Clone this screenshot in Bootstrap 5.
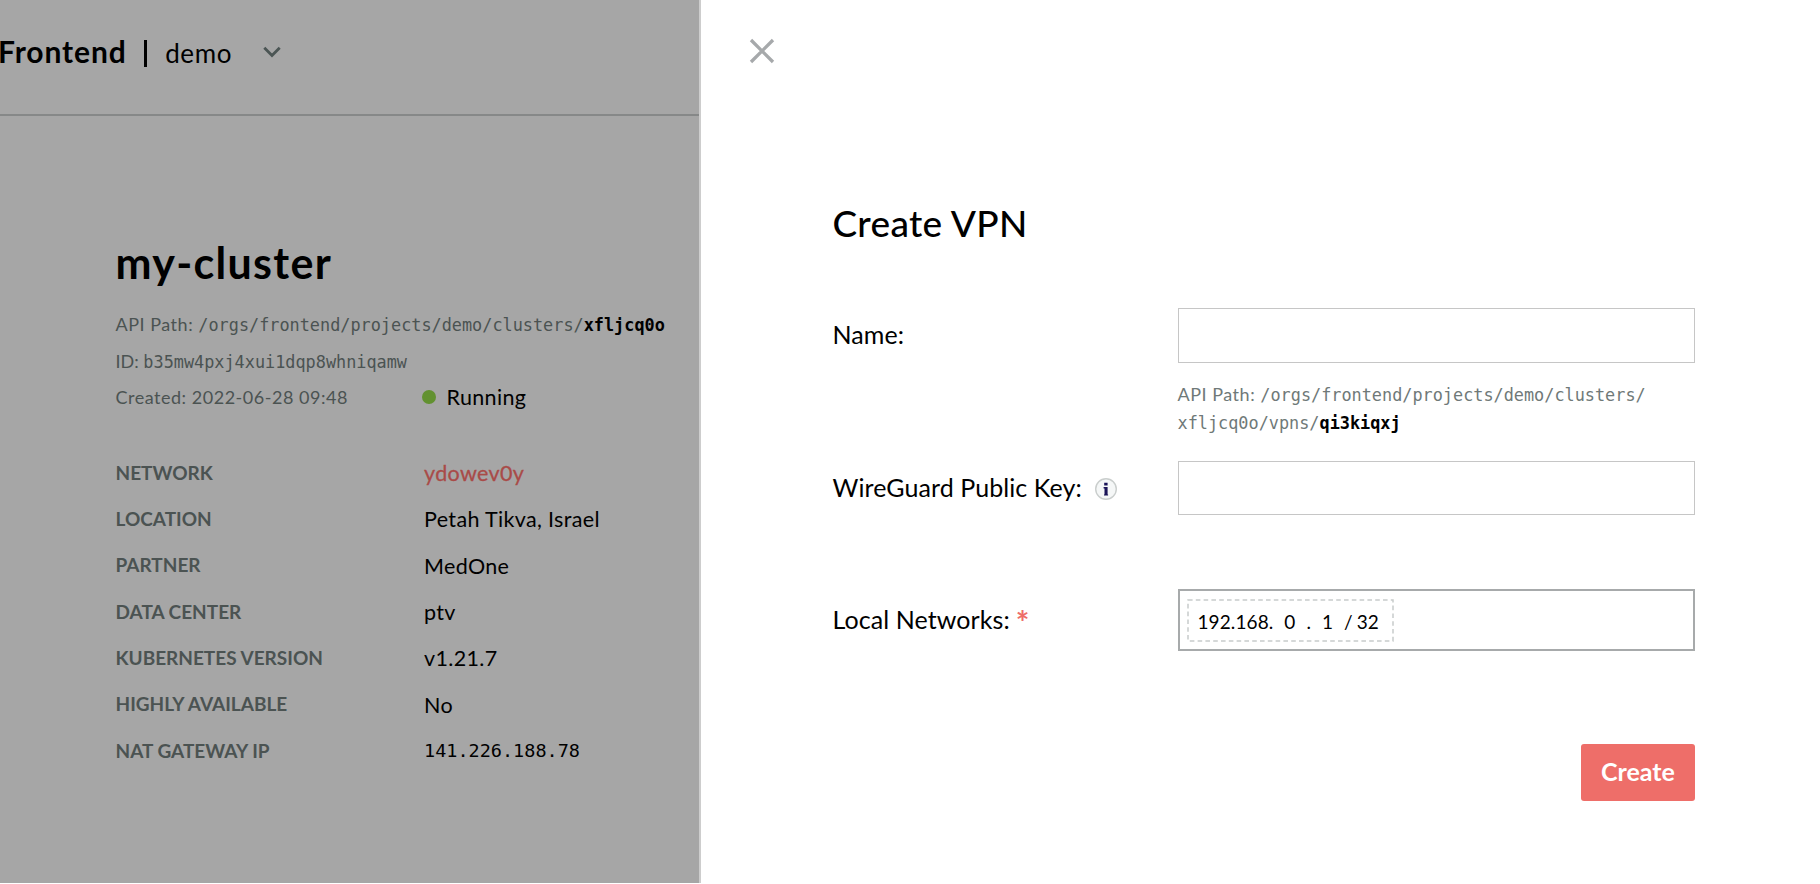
<!DOCTYPE html>
<html lang="en">
<head>
<meta charset="utf-8">
<title>Create VPN</title>
<link rel="stylesheet" href="https://cdn.jsdelivr.net/npm/bootstrap@5.3.0/dist/css/bootstrap.min.css">
<style>
body{width:1820px;height:884px;overflow:hidden;background:#fff;color:#000;font-family:Lato,"Open Sans",sans-serif;white-space:nowrap}
.backdrop-side{width:699px;height:883px;background:#a6a6a6}
.drawer{border-left:2px solid #cdcdcd;height:883px}
.top-line{height:116px;border-bottom:2px solid #868888;padding-bottom:10px}
.org{font-size:30px;font-weight:700;margin-left:-2px;letter-spacing:.9px;line-height:36px;margin-top:-2px}
.bar{width:3px;height:27px;background:#000;margin:2px 18px 0 17.5px}
.proj{font-size:26px;letter-spacing:.6px;margin-top:1px;line-height:36px}
.chev{margin:0 0 0 31px}
.cluster{padding-left:115.5px}
.title{font-size:43px;font-weight:700;line-height:50px;margin:122px 0 18px;letter-spacing:1.3px}
.meta{font-size:18px;color:#4b5352;line-height:36px;height:37px}
.meta.created-line{height:36px;margin-top:-1.5px}
.wide{letter-spacing:.52px}
.mono{font-family:"DejaVu Sans Mono",monospace;font-size:16.85px;line-height:1;letter-spacing:0}
.mono b{color:#000}
.created{width:306.5px}
.dot{width:14px;height:14px;border-radius:50%;background:#629130;margin-right:10.5px}
.facts{margin-top:35.5px}
.fact{height:46.3px}
.fact dt{width:308.5px;font-size:19px;color:#4b5352}
.fact dd,.run{font-size:21.5px;color:#000;letter-spacing:.35px}
.fact dd.ip{font-size:18.5px;letter-spacing:0}
.fact dd.net{color:#a94b48;-webkit-text-stroke:.3px #a94b48}
.close-x{margin:38px 0 0 47.5px;display:block}
.pane{padding-left:131.5px}
.head{font-size:37px;line-height:44px;margin:136.5px 0 63.5px;letter-spacing:.3px}
.lab{width:345px;font-size:25px;line-height:53px;letter-spacing:.08px}
.field-row .form-control,.box{width:517.5px;height:54.5px;border:1.5px solid #c6c6c6;border-radius:0}
.name-row{height:152.5px}
.key-row{height:128.5px}
.nets-row{height:154.5px}
.field-row .box{height:62px;border:2px solid #a7aaab;padding-left:7px}
.chip{width:207px;height:43px}
.chip-frame{position:absolute;inset:0}
.chip-text{font-size:19px;padding:4px 0 0 11px;letter-spacing:.1px}
.octet{width:19px;text-align:center}
.gap-s{margin-left:4px}
.gap-m{margin-left:7px}
.help{font-size:18px;line-height:28.4px;color:#6f7978;margin-top:17px}
.star{color:#ee6e69;font-size:32px;font-weight:700;line-height:30px;height:30px;margin:15px 0 0 6px}
.info{margin-top:3px}
.go,.go:hover{background:#ee6e69;color:#fff;width:114px;height:57px;border-radius:3px;font-size:25px;font-weight:700;padding:0;border:0}
.form-area{width:862.5px}
</style>
</head>
<body class="d-flex">
<aside class="backdrop-side flex-shrink-0">
  <header class="top-line d-flex align-items-center">
    <span class="org">Frontend</span><span class="bar"></span><span class="proj">demo</span>
    <svg class="chev" width="18" height="12" viewBox="0 0 18 12" fill="none" stroke="#4b5554" stroke-width="2.8"><path d="M1.3 1.7 9 9.4l7.700-7.700"/></svg>
  </header>
  <div class="cluster">
    <h1 class="title">my-cluster</h1>
    <div class="meta"><span class="wide">API Path: </span><span class="mono">/orgs/frontend/projects/demo/clusters/<b>xfljcq0o</b></span></div>
    <div class="meta">ID: <span class="mono">b35mw4pxj4xui1dqp8whniqamw</span></div>
    <div class="meta created-line d-flex align-items-center"><div class="created wide">Created: 2022-06-28 09:48</div><span class="dot"></span><span class="run">Running</span></div>
    <dl class="facts mb-0">
      <div class="fact d-flex align-items-center"><dt>NETWORK</dt><dd class="mb-0 net">ydowev0y</dd></div>
      <div class="fact d-flex align-items-center"><dt>LOCATION</dt><dd class="mb-0">Petah Tikva, Israel</dd></div>
      <div class="fact d-flex align-items-center"><dt>PARTNER</dt><dd class="mb-0">MedOne</dd></div>
      <div class="fact d-flex align-items-center"><dt>DATA CENTER</dt><dd class="mb-0">ptv</dd></div>
      <div class="fact d-flex align-items-center"><dt>KUBERNETES VERSION</dt><dd class="mb-0">v1.21.7</dd></div>
      <div class="fact d-flex align-items-center"><dt>HIGHLY AVAILABLE</dt><dd class="mb-0">No</dd></div>
      <div class="fact d-flex align-items-center"><dt>NAT GATEWAY IP</dt><dd class="mb-0 mono ip">141.226.188.78</dd></div>
    </dl>
  </div>
</aside>
<main class="drawer flex-grow-1">
  <svg class="close-x" width="26" height="26" viewBox="0 0 26 26" stroke="#a6a9ab" stroke-width="3.3"><path d="M2 2 24 24M24 2 2 24"/></svg>
  <div class="pane">
    <h2 class="head">Create VPN</h2>
    <form class="form-area">
      <div class="field-row name-row d-flex">
        <label class="lab">Name:</label>
        <div><input class="form-control" aria-label="Name">
          <div class="help"><span class="wide">API Path: </span><span class="mono">/orgs/frontend/projects/demo/clusters/<br>xfljcq0o/vpns/<b>qi3kiqxj</b></span></div>
        </div>
      </div>
      <div class="field-row key-row d-flex">
        <label class="lab d-flex align-items-center align-self-start">WireGuard Public Key:
          <svg class="info ms-2" width="32" height="24" viewBox="0 0 32 24"><circle cx="16" cy="12" r="10.3" fill="#f5f7f7" stroke="#cacecd" stroke-width="1.4"/><path d="M14.2 5.800h3.400v2.700h-3.400zM13.600 10h4v7.400h.5v1h-4.100v-1h.5v-5.900h-.9z" fill="#1b1458"/></svg>
        </label>
        <input class="form-control" aria-label="WireGuard Public Key">
      </div>
      <div class="field-row nets-row d-flex">
        <label class="lab pt-1 d-flex align-self-start"><span>Local Networks:</span><span class="star">*</span></label>
        <div class="box d-flex align-items-center">
          <div class="chip position-relative">
            <svg class="chip-frame" width="207" height="43" fill="none" stroke="#c8cccb" stroke-width="1.5"><rect x="1" y="1" width="205" height="41" stroke-dasharray="4.6 3.2"/></svg>
            <div class="chip-text d-flex align-items-center h-100"><span>192.168.</span><span class="octet gap-m">0</span><span class="gap-m">.</span><span class="octet gap-m">1</span><span class="gap-m">/</span><span class="gap-s">32</span></div>
          </div>
        </div>
      </div>
      <div class="d-flex justify-content-end"><button type="button" class="btn go">Create</button></div>
    </form>
  </div>
</main>
<script src="https://cdn.jsdelivr.net/npm/bootstrap@5.3.0/dist/js/bootstrap.bundle.min.js"></script>
</body>
</html>
